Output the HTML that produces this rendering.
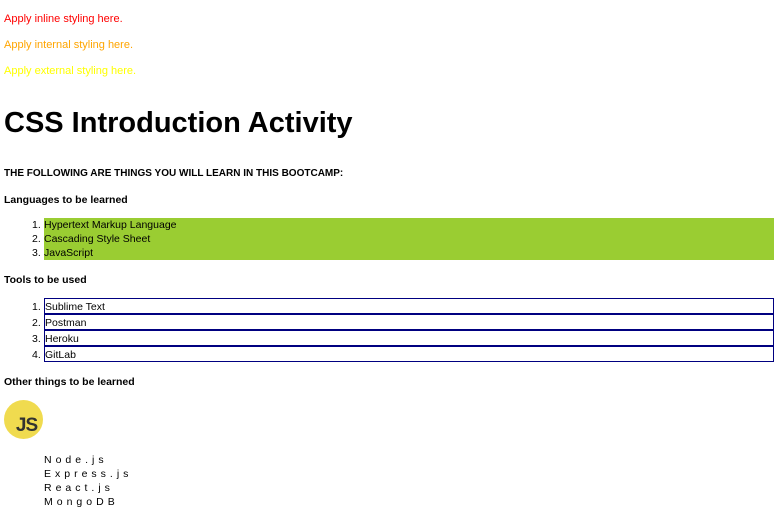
<!DOCTYPE html>
<html><head><meta charset="utf-8"><style>
body{margin:0;width:782px;height:518px;background:#fff;font-family:"Liberation Sans",sans-serif;color:#000;position:relative;overflow:hidden}
.a{position:absolute;left:4px;font-size:11px;line-height:14px;white-space:nowrap}
.b{font-weight:bold}
ol{position:absolute;left:44px;right:8px;margin:0;padding:0;font-size:10.5px;list-style:none}
.num{position:absolute;left:-12px}
.g li{height:14px;line-height:15px;background:#9acd32;position:relative}
.t li{height:14px;line-height:16px;border:1px solid #000080;position:relative;margin:0}
.t li .num{left:-13px}
.m{position:absolute;left:44px;font-size:10.5px;line-height:14px;letter-spacing:4px}
</style></head><body>
<div class="a" style="top:12px;color:#ff0000">Apply inline styling here.</div>
<div class="a" style="top:38px;color:#ffa500">Apply internal styling here.</div>
<div class="a" style="top:64px;color:#ffff00">Apply external styling here.</div>
<div class="a b" style="top:103px;font-size:29px;line-height:40px">CSS Introduction Activity</div>
<div class="a" style="top:167px;font-size:10px;font-weight:bold">THE FOLLOWING ARE THINGS YOU WILL LEARN IN THIS BOOTCAMP:</div>
<div class="a b" style="top:193px;font-size:10.5px">Languages to be learned</div>
<ol class="g" style="top:218px"><li><span class="num">1.</span>Hypertext Markup Language</li><li><span class="num">2.</span>Cascading Style Sheet</li><li><span class="num">3.</span>JavaScript</li></ol>
<div class="a b" style="top:273px;font-size:10.5px">Tools to be used</div>
<ol class="t" style="top:298px"><li><span class="num">1.</span>Sublime Text</li><li><span class="num">2.</span>Postman</li><li><span class="num">3.</span>Heroku</li><li><span class="num">4.</span>GitLab</li></ol>
<div class="a b" style="top:375px;font-size:10.5px">Other things to be learned</div>
<div style="position:absolute;left:4px;top:400px;width:39px;height:39px;border-radius:50%;background:#f0db4f;color:#323330;font-weight:bold;font-size:19px;line-height:39px;text-align:center;letter-spacing:-1px;padding-top:6px;padding-left:6px;box-sizing:border-box">JS</div>
<div class="m" style="top:453px">Node.js</div>
<div class="m" style="top:467px">Express.js</div>
<div class="m" style="top:481px">React.js</div>
<div class="m" style="top:495px">MongoDB</div>
</body></html>
